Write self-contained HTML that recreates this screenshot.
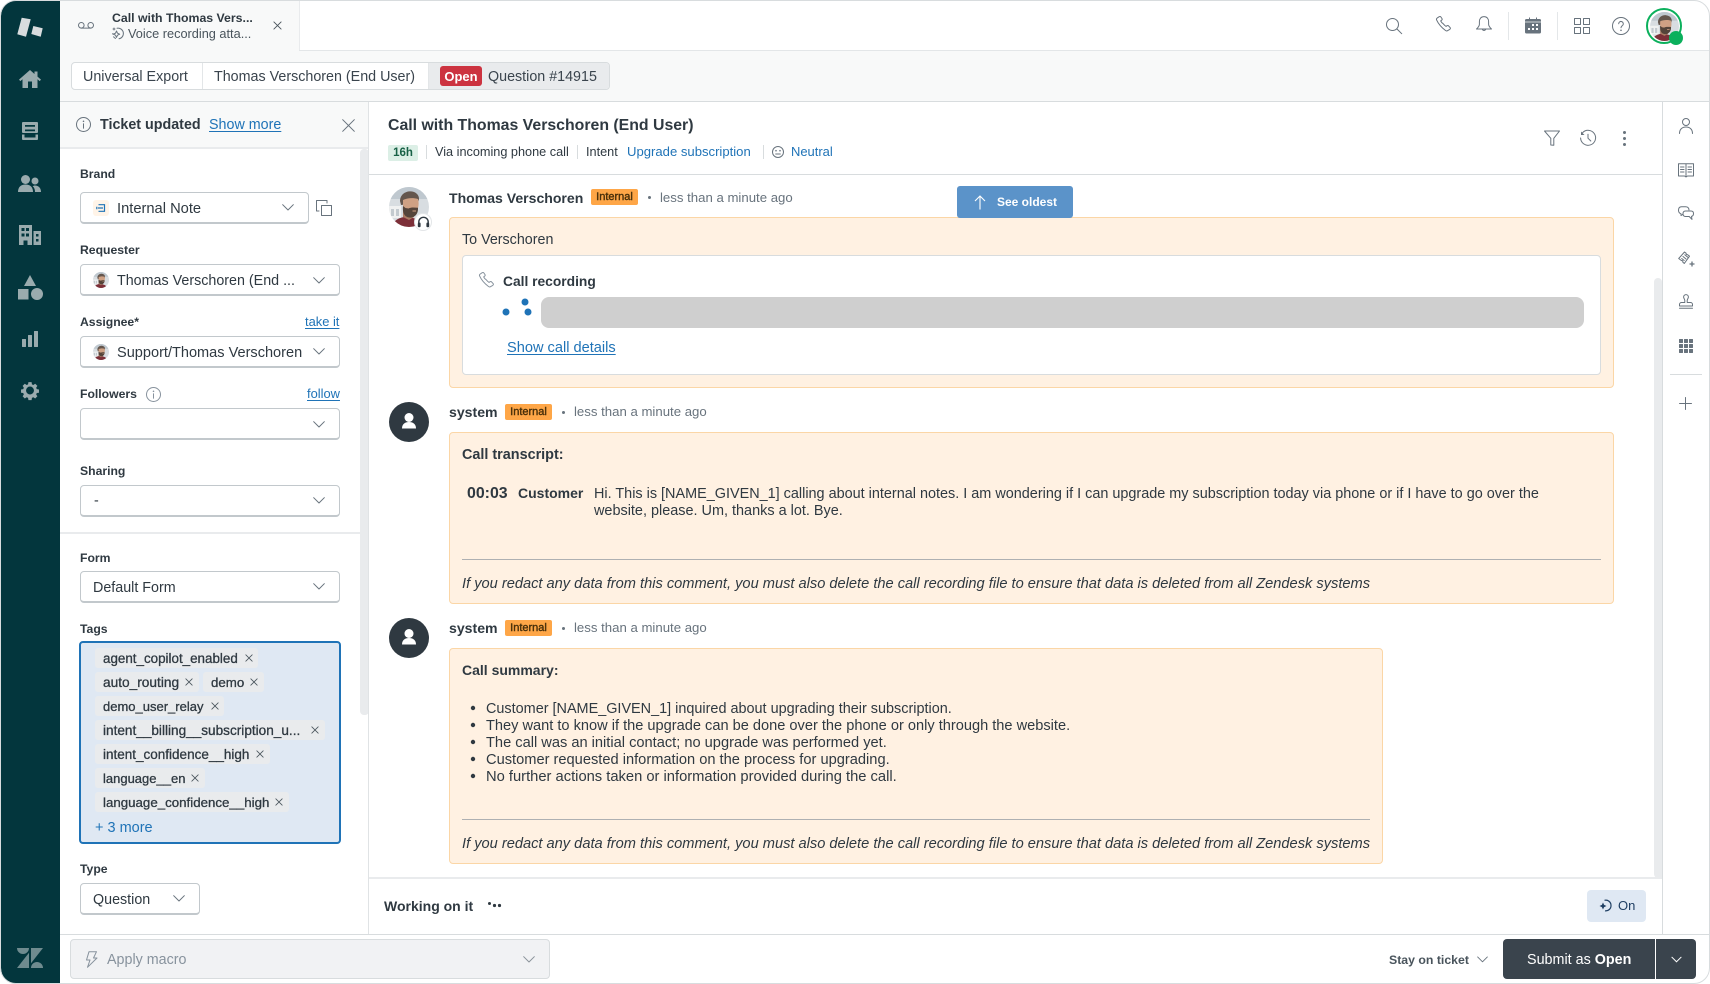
<!DOCTYPE html>
<html lang="en"><head><meta charset="utf-8"><title>Call with Thomas Verschoren</title>
<style>
*{box-sizing:border-box}
html,body{margin:0;padding:0;width:1710px;height:984px;overflow:hidden;background:#fff;font-family:"Liberation Sans",Arial,sans-serif;color:#2f3941}
#app{position:relative;width:1710px;height:984px;overflow:hidden;background:#fff}
.a{position:absolute}
.t{position:absolute;white-space:nowrap;line-height:20px;font-size:14.3px;margin-top:1px}
.b{font-weight:bold}
.l{color:#1f73b7}
.u{text-decoration:underline;text-decoration-thickness:1px;text-underline-offset:2px}
.lab{position:absolute;white-space:nowrap;line-height:16px;font-size:12.2px;font-weight:bold;left:80px}
.sel{position:absolute;background:#fff;border:1px solid #c2c8cc;border-bottom-width:2px;border-radius:4px;height:32px}
svg{position:absolute;overflow:visible}
.st{fill:none;stroke:#68737d;stroke-width:1;stroke-linecap:round;stroke-linejoin:round}
.nv{fill:#9aabae}
.tag{position:absolute;height:20px;left:95px;background:#e9ebed;border-radius:3px}
.tag span{position:absolute;left:8px;top:1px;line-height:20px;font-size:13.3px;white-space:nowrap;-webkit-text-stroke:.3px #2f3941}
.bub{position:absolute;background:#fff1e2;border:1px solid #fbd6a6;border-radius:4px}
.int{position:absolute;height:16px;width:47px;background:#fea647;border-radius:2px;color:#49300a;font-size:11px;line-height:17px;text-align:center;-webkit-text-stroke:.4px #49300a}
.time{position:absolute;white-space:nowrap;color:#68737d;font-size:13.2px;line-height:20px}
.d{position:absolute;width:3px;height:3px;border-radius:50%;background:#68737d}
.sep{position:absolute;background:#d8dcde}
.ph{filter:blur(.35px)}
</style></head><body>
<div id="app">
<svg width="0" height="0" style="position:absolute">
<defs>
<symbol id="chev" viewBox="0 0 12 7"><path d="M.7.7L6 6l5.3-5.3" fill="none" stroke="#68737d" stroke-width="1" stroke-linecap="round" stroke-linejoin="round"/></symbol>
<symbol id="x" viewBox="0 0 10 10"><path d="M1 1l8 8M9 1L1 9" fill="none" stroke="#49545c" stroke-width="1" stroke-linecap="round"/></symbol>
<clipPath id="cl"><circle cx="20" cy="20" r="20"/></clipPath>
<symbol id="man" viewBox="0 0 40 40"><g clip-path="url(#cl)">
<rect width="40" height="40" fill="#d8dde1"/><rect y="0" width="40" height="12" fill="#bfc8cf"/>
<rect x="0" y="19" width="12" height="12" fill="#f0f1f1"/><rect x="2" y="22" width="3" height="7" fill="#c3cacf"/><rect x="7" y="22" width="3" height="7" fill="#c3cacf"/>
<path d="M3 40c1-6 6-9 12-10l9 1c6 1 10 4 11 9z" fill="#7c2f38"/>
<path d="M14 24h11v6l-5 3-6-3z" fill="#a97a62"/>
<path d="M11 14c0-6 5-10 11-9.600 5 .4 8 3.600 8 7.600l-1 4-17 2z" fill="#64564d"/>
<path d="M14 13c4-2.200 10.500-2.500 15-1 .8 3 .8 6 0 9l-7 4-8-5z" fill="#cfa184"/>
<path d="M14 19l2.500 2 3 .5c3-1.500 6-.8 9.500-.8.300 4.500-1.500 8.500-6.500 9.800-5 .7-9.500-2.500-8.500-11.500z" fill="#54443a"/>
<path d="M23.500 24h3.500" stroke="#cfa184" stroke-width="1"/>
</g></symbol>
<symbol id="sysav" viewBox="0 0 40 40"><circle cx="20" cy="20" r="20" fill="#2f3941"/><circle cx="20" cy="15.500" r="4.500" fill="#fff"/><path d="M13 26.500c0-4.500 3-6.500 7-6.500s7 2 7 6.500z" fill="#fff"/></symbol>
</defs></svg>

<!-- left nav -->
<div class="a" style="left:1px;top:0;width:59px;height:984px;background:#03363d;border-radius:16px 0 0 16px"></div>
<svg style="left:0;top:0" width="60" height="420" viewBox="0 0 60 420">
<path d="M21.700 17.700l9 1.600L26 36.700l-8.700-2.400z" fill="#d8dcde"/>
<path d="M33.300 26l9.400 2.300-2 8.400-9.400-2.700z" fill="#d8dcde"/>
<path class="nv" d="M30 70L19 79.600l1.300 1.500 2.200-1.900V88h5.500v-6.500h4V88h5.500v-8.800l2.200 1.900 1.300-1.500-3.500-3V71.500h-3v2.500z"/>
<path class="nv" d="M23 122h14a1 1 0 011 1v9a1 1 0 01-1 1H23a1 1 0 01-1-1v-9a1 1 0 011-1zm2 3v1.800h10V125zm0 4.500v1.800h10v-1.800zM22 134.500h2.500v3h11v-3H38v4.500a1 1 0 01-1 1H23a1 1 0 01-1-1z"/>
<circle class="nv" cx="25.500" cy="179.500" r="4.500"/><path class="nv" d="M18 192c0-5 3-7.500 7.500-7.500S33 187 33 192z"/>
<circle class="nv" cx="35" cy="181" r="3.500"/><path class="nv" d="M35 185.500c3.500 0 6 2.500 6 6.500h-6c0-2.500-.8-4.500-2.300-5.700.6-.5 1.300-.8 2.300-.8z"/>
<path class="nv" d="M19 225h13v20h-4.500v-4.500h-4V245H19zm2.500 3v3h3v-3zm4.500 0v3h3v-3zm-4.500 5.500v3h3v-3zm4.500 0v3h3v-3z"/>
<path class="nv" d="M33.500 231H41v14h-7.500zm2.500 3v2.500h2.500V234zm0 5v2.500h2.500V239z"/>
<path class="nv" d="M30 275l6 11H24z"/><rect class="nv" x="18" y="289" width="10.500" height="10.500"/><circle class="nv" cx="37" cy="294" r="6"/>
<rect class="nv" x="22" y="339" width="4" height="8" rx=".5"/><rect class="nv" x="28" y="335" width="4" height="12" rx=".5"/><rect class="nv" x="34" y="331" width="4" height="16" rx=".5"/>
<g transform="translate(30 390.500) scale(.88) translate(-30 -392.500)"><path class="nv" fill-rule="evenodd" d="M28.200 383h3.600l.4 2.500 1.600.7 2.100-1.400 2.500 2.500-1.400 2.100.7 1.600 2.500.4v3.600l-2.500.4-.7 1.600 1.400 2.100-2.500 2.500-2.100-1.400-1.600.7-.4 2.500h-3.600l-.4-2.500-1.600-.7-2.100 1.400-2.500-2.500 1.400-2.100-.7-1.600-2.500-.4v-3.600l2.500-.4.7-1.600-1.400-2.100 2.500-2.500 2.100 1.400 1.600-.7zM30 388a4.500 4.500 0 100 9 4.500 4.500 0 000-9z"/></g>
</svg>
<svg style="left:17px;top:948px" width="26" height="20" viewBox="0 0 26 20">
<path fill="#6f8b8f" d="M12 4.800V20H0zM12 0a6 6 0 01-12 0zM14 20a6 6 0 0112 0zM14 15.200V0h12z"/>
</svg>

<!-- top band -->
<div class="a" style="left:60px;top:0;width:240px;height:51px;background:#f8f9f9;border-right:1px solid #e9ebed"></div>
<div class="a" style="left:299px;top:50px;width:1411px;height:1px;background:#e3e6e8"></div>
<div class="a" style="left:60px;top:51px;width:1650px;height:51px;background:#f8f9f9;border-bottom:1px solid #d8dcde"></div>
<svg style="left:78px;top:21px" width="16" height="10" viewBox="0 0 16 10"><circle class="st" cx="3.300" cy="4.300" r="2.800"/><circle class="st" cx="12.700" cy="4.300" r="2.800"/><path class="st" d="M3.300 7.100h9.400"/></svg>
<span class="t b" style="left:112px;top:7px;font-size:12.3px">Call with Thomas Vers...</span>
<svg style="left:112px;top:27px" width="13" height="13" viewBox="0 0 13 13"><path class="st" d="M5 1.200A5.200 5.200 0 117 11.800M1.600 9.800a5 5 0 002 1.600M.8 6.500v.6M4.500 4l1 2.200 2.200 1-2.200 1-1 2.200-1-2.200-2.200-1 2.200-1zM2 1v2M1 2h2"/></svg>
<span class="t" style="left:128px;top:23px;font-size:12.75px;color:#49545c">Voice recording atta...</span>
<svg style="left:273px;top:21px" width="9" height="9"><use href="#x" width="9" height="9"/></svg>

<!-- header icons -->
<svg style="left:1386px;top:18px" width="16" height="16" viewBox="0 0 16 16"><circle class="st" cx="6.500" cy="6.500" r="6"/><path class="st" d="M11 11l4.700 4.700"/></svg>
<svg id="ph1" style="left:1436px;top:16px" width="16" height="16" viewBox="0 0 16 16"><path class="st" d="M3.200.7L1.100 2.100c-.7.500-.8 1.100-.5 1.800.9 2 2.100 3.900 3.600 5.700 1.600 1.900 3.400 3.500 5.300 4.900.7.500 1.400.6 2 .2l2.200-1.300c.6-.4 1-1.100.5-1.700l-1.600-1.800c-.4-.5-1-.5-1.500-.2l-1.100.7c-1.100-.8-2.100-1.800-3.100-3C6 7.200 5.300 6.100 4.700 4.900l1-.8c.5-.4.600-1 .3-1.500L4.900 1C4.500.4 3.800.3 3.200.7z"/></svg>
<svg style="left:1476px;top:16px" width="16" height="16" viewBox="0 0 16 16"><path class="st" d="M8 .6c-3 0-4.600 2.200-4.600 5v2.600c0 2-1.500 3.400-2.900 4.800h15c-1.400-1.400-2.900-2.800-2.900-4.800V5.600C12.600 2.800 11 .6 8 .6zM6.300 13.200a1.800 1.800 0 003.400 0"/></svg>
<div class="sep" style="left:1508px;top:12px;width:1px;height:28px;background:#e4e7e9"></div>
<svg style="left:1525px;top:17px" width="16" height="17" viewBox="0 0 16 17"><path fill="#68737d" d="M1.500 2H4V.5h1V2h6V.5h1V2h2.500A1.500 1.500 0 0116 3.500V15a1.500 1.500 0 01-1.500 1.500h-13A1.500 1.500 0 010 15V3.500A1.500 1.500 0 011.500 2z"/><path d="M0 5h16" stroke="#fff" stroke-width=".7"/><g fill="#fff"><rect x="7" y="7" width="2" height="2"/><rect x="11" y="7" width="2" height="2"/><rect x="3" y="11" width="2" height="2"/><rect x="7" y="11" width="2" height="2"/><rect x="11" y="11" width="2" height="2"/></g></svg>
<div class="sep" style="left:1557px;top:12px;width:1px;height:28px;background:#e4e7e9"></div>
<svg style="left:1574px;top:18px" width="16" height="16" viewBox="0 0 16 16"><rect class="st" x=".5" y=".5" width="6" height="6"/><rect class="st" x="9.500" y=".5" width="6" height="6"/><rect class="st" x=".5" y="9.500" width="6" height="6"/><rect class="st" x="9.500" y="9.500" width="6" height="6"/></svg>
<svg style="left:1612px;top:17px" width="18" height="18" viewBox="0 0 18 18"><circle class="st" cx="9" cy="9" r="8.500"/><path class="st" d="M6.700 6.800a2.300 2.300 0 114 1.500c-.8.800-1.700 1.200-1.700 2.500"/><circle cx="9" cy="13.300" r=".8" fill="#68737d"/></svg>
<div class="a" style="left:1646px;top:8px;width:36px;height:36px;border:2px solid #0bb05c;border-radius:50%;background:#fff"></div>
<svg class="ph" style="left:1649.500px;top:11.500px" width="29" height="29"><use href="#man" width="29" height="29"/></svg>
<div class="a" style="left:1669px;top:31px;width:14px;height:14px;border-radius:50%;background:#0bb05c"></div>

<!-- breadcrumb -->
<div class="a" style="left:71px;top:62px;width:539px;height:28px;background:#fff;border:1px solid #d8dcde;border-radius:4px;overflow:hidden">
  <div class="a" style="left:130px;top:0;width:1px;height:26px;background:#e3e6e8"></div>
  <div class="a" style="left:356px;top:0;width:182px;height:26px;background:#e9ebed;border-left:1px solid #e3e6e8"></div>
</div>
<span class="t" style="left:83px;top:66px;color:#3a444d">Universal Export</span>
<span class="t" style="left:214px;top:66px;color:#3a444d">Thomas Verschoren (End User)</span>
<div class="a b" style="left:440px;top:66px;width:42px;height:20px;background:#cc3340;border-radius:3px;color:#fff;font-size:13px;line-height:21px;text-align:center">Open</div>
<span class="t" style="left:488px;top:66px;color:#3a444d">Question #14915</span>

<!-- left panel -->
<div class="a" style="left:60px;top:102px;width:308px;height:47px;background:#f8f9f9;border-bottom:2px solid #e9ebed"></div>
<svg style="left:76px;top:117px" width="15" height="15" viewBox="0 0 15 15"><circle class="st" cx="7.500" cy="7.500" r="7"/><path class="st" d="M7.500 6.800v4.400"/><circle cx="7.500" cy="4.300" r=".8" fill="#68737d"/></svg>
<span class="t b" style="left:100px;top:114px">Ticket updated</span>
<span class="t l u" style="left:209px;top:114px;font-size:14.3px">Show more</span>
<svg style="left:342px;top:119px" width="13" height="13" viewBox="0 0 13 13"><path class="st" d="M.7.700l11.600 11.600M12.300.7L.7 12.300"/></svg>
<div class="a" style="left:360px;top:149px;width:8.500px;height:566px;background:#e9ebed;border-radius:4px"></div>
<div class="a" style="left:368px;top:102px;width:1px;height:832px;background:#e0e3e5"></div>

<span class="lab" style="top:166px">Brand</span>
<div class="sel" style="left:80px;top:192px;width:229px"></div>
<div class="a" style="left:93px;top:200px;width:16px;height:16px;background:#fff4e8;border-radius:3px"></div>
<svg style="left:96px;top:204px" width="10" height="8" viewBox="0 0 10 8"><path d="M2.500.7h6v6.600h-6M2 4h5M.8 2.700v2.600" fill="none" stroke="#1f73b7" stroke-width="1.200"/></svg>
<span class="t" style="left:117px;top:198px;font-size:14.7px">Internal Note</span>
<svg style="left:282px;top:204px" width="12" height="7"><use href="#chev" width="12" height="7"/></svg>
<svg style="left:316px;top:200px" width="16" height="16" viewBox="0 0 16 16"><rect class="st" x="5.500" y="5.500" width="10" height="10"/><path class="st" d="M11 3V.5H.5V11H3"/></svg>

<span class="lab" style="top:242px">Requester</span>
<div class="sel" style="left:80px;top:264px;width:260px"></div>
<svg class="ph" style="left:93px;top:272px" width="16" height="16"><use href="#man" width="16" height="16"/></svg>
<span class="t" style="left:117px;top:270px">Thomas Verschoren (End ...</span>
<svg style="left:313px;top:277px" width="12" height="7"><use href="#chev" width="12" height="7"/></svg>

<span class="lab" style="top:314px">Assignee*</span>
<span class="t l u" style="left:305px;top:311px;font-size:12.9px">take it</span>
<div class="sel" style="left:80px;top:336px;width:260px"></div>
<svg class="ph" style="left:93px;top:344px" width="16" height="16"><use href="#man" width="16" height="16"/></svg>
<span class="t" style="left:117px;top:342px;font-size:14.55px">Support/Thomas Verschoren</span>
<svg style="left:313px;top:348px" width="12" height="7"><use href="#chev" width="12" height="7"/></svg>

<span class="lab" style="top:386px">Followers</span>
<svg style="left:146px;top:387px" width="15" height="15" viewBox="0 0 15 15"><circle class="st" cx="7.500" cy="7.500" r="7" style="stroke:#87929d"/><path class="st" d="M7.500 6.800v4.400" style="stroke:#87929d"/><circle cx="7.500" cy="4.300" r=".8" fill="#87929d"/></svg>
<span class="t l u" style="left:307px;top:383px;font-size:12.9px">follow</span>
<div class="sel" style="left:80px;top:408px;width:260px"></div>
<svg style="left:313px;top:421px" width="12" height="7"><use href="#chev" width="12" height="7"/></svg>

<span class="lab" style="top:463px">Sharing</span>
<div class="sel" style="left:80px;top:485px;width:260px"></div>
<span class="t" style="left:94px;top:490px">-</span>
<svg style="left:313px;top:497px" width="12" height="7"><use href="#chev" width="12" height="7"/></svg>

<div class="a" style="left:60px;top:532px;width:300px;height:2px;background:#e9ebed"></div>

<span class="lab" style="top:550px">Form</span>
<div class="sel" style="left:80px;top:571px;width:260px"></div>
<span class="t" style="left:93px;top:576.500px">Default Form</span>
<svg style="left:313px;top:583px" width="12" height="7"><use href="#chev" width="12" height="7"/></svg>

<span class="lab" style="top:621px">Tags</span>
<div class="a" style="left:79px;top:641px;width:262px;height:203px;background:#dfe8f3;border:2px solid #1f73b7;border-radius:4px"></div>
<div class="tag" style="top:648px;width:163px"><span style="font-size:13.4px">agent_copilot_enabled</span></div>
<svg style="left:245px;top:654px" width="8" height="8"><use href="#x" width="8" height="8"/></svg>
<div class="tag" style="top:672px;width:104px"><span style="font-size:13.7px">auto_routing</span></div>
<svg style="left:185px;top:678px" width="8" height="8"><use href="#x" width="8" height="8"/></svg>
<div class="tag" style="top:672px;left:203px;width:61px"><span>demo</span></div>
<svg style="left:250px;top:678px" width="8" height="8"><use href="#x" width="8" height="8"/></svg>
<div class="tag" style="top:696px;width:129px"><span style="font-size:13px">demo_user_relay</span></div>
<svg style="left:211px;top:702px" width="8" height="8"><use href="#x" width="8" height="8"/></svg>
<div class="tag" style="top:720px;width:230px"><span style="font-size:13.6px">intent__billing__subscription_u...</span></div>
<svg style="left:311px;top:726px" width="8" height="8"><use href="#x" width="8" height="8"/></svg>
<div class="tag" style="top:744px;width:175px"><span style="font-size:13.5px">intent_confidence__high</span></div>
<svg style="left:256px;top:750px" width="8" height="8"><use href="#x" width="8" height="8"/></svg>
<div class="tag" style="top:768px;width:110px"><span style="font-size:13px">language__en</span></div>
<svg style="left:191px;top:774px" width="8" height="8"><use href="#x" width="8" height="8"/></svg>
<div class="tag" style="top:792px;width:194px"><span>language_confidence__high</span></div>
<svg style="left:275px;top:798px" width="8" height="8"><use href="#x" width="8" height="8"/></svg>
<span class="t l" style="left:95px;top:817px;font-size:14.500px">+ 3 more</span>

<span class="lab" style="top:861px">Type</span>
<div class="sel" style="left:80px;top:883px;width:120px"></div>
<span class="t" style="left:93px;top:888.500px">Question</span>
<svg style="left:173px;top:895px" width="12" height="7"><use href="#chev" width="12" height="7"/></svg>

<!-- main header -->
<span class="t b" style="left:388px;top:115px;font-size:15.850px">Call with Thomas Verschoren (End User)</span>
<div class="a b" style="left:388px;top:145px;width:30px;height:16px;background:#dcefe6;border-radius:2px;color:#186146;font-size:11.500px;line-height:17px;text-align:center">16h</div>
<div class="sep" style="left:426px;top:145px;width:1px;height:14px"></div>
<span class="t" style="left:435px;top:141px;font-size:12.700px">Via incoming phone call</span>
<div class="sep" style="left:577px;top:145px;width:1px;height:14px"></div>
<span class="t" style="left:586px;top:141px;font-size:12.700px">Intent</span>
<span class="t l" style="left:627px;top:141px;font-size:13.100px">Upgrade subscription</span>
<div class="sep" style="left:763px;top:145px;width:1px;height:14px"></div>
<svg style="left:772px;top:146px" width="12" height="12" viewBox="0 0 12 12"><circle class="st" cx="6" cy="6" r="5.500"/><circle cx="4" cy="4.700" r=".8" fill="#68737d"/><circle cx="8" cy="4.700" r=".8" fill="#68737d"/><path class="st" d="M3.700 8h4.600"/></svg>
<span class="t l" style="left:791px;top:141px;font-size:12.950px">Neutral</span>
<svg style="left:1544px;top:130px" width="16" height="16" viewBox="0 0 16 16"><path class="st" d="M.5 1h15L9.800 8.300v7L6.800 15V8.300z"/></svg>
<svg style="left:1580px;top:130px" width="16" height="16" viewBox="0 0 16 16"><path class="st" d="M2.500 2.800A7.500 7.500 0 11.600 8M8 4.200v4l2.800 2.800"/><path d="M1 1.500l3.500 3.500H1z" fill="#68737d"/></svg>
<div class="a" style="left:1622.500px;top:130.500px;width:3px;height:3px;border-radius:50%;background:#68737d;box-shadow:0 6px 0 #68737d,0 12px 0 #68737d"></div>
<div class="a" style="left:369px;top:174px;width:1294px;height:1px;background:#d8dcde"></div>

<!-- right sidebar -->
<div class="a" style="left:1662px;top:102px;width:1px;height:832px;background:#d8dcde"></div>
<div class="a" style="left:1654px;top:278px;width:8px;height:600px;background:#e9ebed;border-radius:4px 4px 0 4px"></div>
<svg style="left:1678px;top:118px" width="16" height="16" viewBox="0 0 16 16"><circle class="st" cx="8" cy="4" r="3.500"/><path class="st" d="M1.500 15.500c0-4 2.500-6.500 6.500-6.500s6.500 2.500 6.500 6.500"/></svg>
<svg style="left:1678px;top:163px" width="16" height="15" viewBox="0 0 16 15"><path class="st" d="M.5.700h15v12.300H9.500L8 14l-1.500-1H.5zM8 1.500V13M2.500 4h3.500M2.500 6.500h3.500M2.500 9h3.500M10 4h3.500M10 6.500h3.500M10 9h3.500"/></svg>
<svg style="left:1678px;top:206px" width="16" height="16" viewBox="0 0 16 16"><path class="st" d="M3.500.7h4c2 0 3.300 1 3.500 3.200M4.500 8.500C4 9 3.500 9.300 3 9.500V7.800C1.500 7.300.5 6 .5 4.300.5 2.200 1.500.7 3.500.7M7.500 5h5.500c1.700 0 2.500 1 2.500 2.600 0 1.500-.8 2.500-2 2.800l.5 3-2.800-2.900H7.500C5.800 10.500 5 9.400 5 7.800 5 6 5.800 5 7.500 5z"/></svg>
<svg style="left:1678px;top:251px" width="17" height="16" viewBox="0 0 17 16"><path class="st" d="M.7 7.500L6.500 1l1.700 1.300c-.3.900.5 1.600 1.300 1.300L11.500 5.200 6.300 12.500 4.700 11c.4-.9-.3-1.700-1.200-1.400zM5 5.500l3 2.500M6.800 3.800l3 2.500M3.700 7.500l2.500 2"/><path d="M14 10.500v5M11.500 13h5" stroke="#68737d" stroke-width="1.300"/></svg>
<svg style="left:1679px;top:294px" width="14" height="15" viewBox="0 0 14 15"><path class="st" d="M7 .6a2.400 2.400 0 00-2.400 2.400c0 1.500 1.200 2 1.200 3.500v2H2.500A2 2 0 00.5 10.500v1.500h13v-1.500a2 2 0 00-2-2H8.200v-2c0-1.500 1.200-2 1.200-3.500A2.400 2.400 0 007 .6zM.5 14.300h13"/></svg>
<svg style="left:1679px;top:339px" width="14" height="14" viewBox="0 0 14 14" fill="#68737d"><rect width="4" height="4" rx=".5"/><rect x="5" width="4" height="4" rx=".5"/><rect x="10" width="4" height="4" rx=".5"/><rect y="5" width="4" height="4" rx=".5"/><rect x="5" y="5" width="4" height="4" rx=".5"/><rect x="10" y="5" width="4" height="4" rx=".5"/><rect y="10" width="4" height="4" rx=".5"/><rect x="5" y="10" width="4" height="4" rx=".5"/><rect x="10" y="10" width="4" height="4" rx=".5"/></svg>
<div class="a" style="left:1670px;top:374px;width:32px;height:1px;background:#d8dcde"></div>
<svg style="left:1679px;top:397px" width="13" height="13" viewBox="0 0 13 13"><path class="st" d="M6.500.5v12M.5 6.500h12"/></svg>

<!-- msg 1 -->
<svg class="ph" style="left:389px;top:187px" width="40" height="40"><use href="#man" width="40" height="40"/></svg>
<div class="a" style="left:414px;top:213px;width:18px;height:18px;background:#fff;border-radius:50%;border:1px solid #e3e6e8"></div>
<svg style="left:416.500px;top:215.500px" width="13" height="13" viewBox="0 0 13 13"><path d="M1.800 7.500V6a4.700 4.700 0 019.400 0v1.500" fill="none" stroke="#2f3941" stroke-width="1.400"/><rect x=".8" y="6.500" width="2.800" height="4.800" rx="1.200" fill="#2f3941"/><rect x="9.400" y="6.500" width="2.800" height="4.800" rx="1.200" fill="#2f3941"/></svg>
<span class="t b" style="left:449px;top:186.500px;font-size:14.050px">Thomas Verschoren</span>
<div class="int" style="left:591px;top:189px">Internal</div>
<div class="d" style="left:648px;top:196px"></div>
<span class="time" style="left:660px;top:187.500px">less than a minute ago</span>
<div class="bub" style="left:449px;top:217px;width:1165px;height:171px"></div>
<div class="a" style="left:957px;top:186px;width:116px;height:32px;background:#5b93c9;border-radius:3px"></div>
<svg style="left:974px;top:195px" width="12" height="15" viewBox="0 0 12 15"><path d="M6 14.500V1M1 6l5-5 5 5" fill="none" stroke="#fff" stroke-width="1.100"/></svg>
<span class="t b" style="left:997px;top:190.500px;color:#fff;font-size:12px">See oldest</span>
<span class="t" style="left:462px;top:229px">To Verschoren</span>
<div class="a" style="left:462px;top:255px;width:1139px;height:120px;background:#fff;border:1px solid #d8dcde;border-radius:4px"></div>
<svg style="left:479px;top:272px" width="16" height="16" viewBox="0 0 16 16"><path d="M3.200.7L1.100 2.100c-.7.500-.8 1.100-.5 1.800.9 2 2.100 3.900 3.600 5.700 1.600 1.900 3.400 3.500 5.300 4.900.7.500 1.400.6 2 .2l2.200-1.300c.6-.4 1-1.100.5-1.700l-1.600-1.800c-.4-.5-1-.5-1.500-.2l-1.100.7c-1.100-.8-2.100-1.800-3.100-3C6 7.200 5.300 6.100 4.700 4.900l1-.8c.5-.4.600-1 .3-1.500L4.900 1C4.500.4 3.800.3 3.200.7z" fill="none" stroke="#87929d" stroke-width="1"/></svg>
<span class="t b" style="left:503px;top:271px;font-size:13.800px">Call recording</span>
<svg style="left:500px;top:296px" width="36" height="24"><circle cx="6" cy="16" r="3.500" fill="#1f73b7"/><circle cx="25" cy="6" r="3.500" fill="#1f73b7"/><circle cx="28" cy="16" r="3.500" fill="#1f73b7"/></svg>
<div class="a" style="left:541px;top:297px;width:1043px;height:31px;background:#cfcfcf;border-radius:8px"></div>
<span class="t l u" style="left:507px;top:337px;font-size:14.600px">Show call details</span>

<!-- msg 2 -->
<svg style="left:389px;top:402px" width="40" height="40"><use href="#sysav" width="40" height="40"/></svg>
<span class="t b" style="left:449px;top:401px;font-size:14.100px">system</span>
<div class="int" style="left:505px;top:404px">Internal</div>
<div class="d" style="left:562px;top:411px"></div>
<span class="time" style="left:574px;top:401.500px">less than a minute ago</span>
<div class="bub" style="left:449px;top:432px;width:1165px;height:172px"></div>
<span class="t b" style="left:462px;top:444px;font-size:14.400px">Call transcript:</span>
<span class="t b" style="left:467px;top:483px;font-size:15.900px">00:03</span>
<span class="t b" style="left:518px;top:482px;font-size:14px">Customer</span>
<span class="t" style="left:594px;top:483px;font-size:14.430px">Hi. This is [NAME_GIVEN_1] calling about internal notes. I am wondering if I can upgrade my subscription today via phone or if I have to go over the</span>
<span class="t" style="left:594px;top:500px;font-size:14.450px">website, please. Um, thanks a lot. Bye.</span>
<div class="a" style="left:462px;top:559px;width:1139px;height:1px;background:#aeb0b2"></div>
<span class="t" style="left:462px;top:573px;font-size:14.640px;font-style:italic">If you redact any data from this comment, you must also delete the call recording file to ensure that data is deleted from all Zendesk systems</span>

<!-- msg 3 -->
<svg style="left:389px;top:618px" width="40" height="40"><use href="#sysav" width="40" height="40"/></svg>
<span class="t b" style="left:449px;top:617px;font-size:14.100px">system</span>
<div class="int" style="left:505px;top:620px">Internal</div>
<div class="d" style="left:562px;top:627px"></div>
<span class="time" style="left:574px;top:617.500px">less than a minute ago</span>
<div class="bub" style="left:449px;top:648px;width:934px;height:216px"></div>
<span class="t b" style="left:462px;top:659px;font-size:14px">Call summary:</span>
<svg style="left:470px;top:700px" width="6" height="80" fill="#2f3941"><circle cx="3" cy="8" r="2.200"/><circle cx="3" cy="25" r="2.200"/><circle cx="3" cy="42" r="2.200"/><circle cx="3" cy="59" r="2.200"/><circle cx="3" cy="76" r="2.200"/></svg>
<span class="t" style="left:486px;top:698px;font-size:14.430px">Customer [NAME_GIVEN_1] inquired about upgrading their subscription.</span>
<span class="t" style="left:486px;top:715px;font-size:14.600px">They want to know if the upgrade can be done over the phone or only through the website.</span>
<span class="t" style="left:486px;top:732px;font-size:14.640px">The call was an initial contact; no upgrade was performed yet.</span>
<span class="t" style="left:486px;top:749px;font-size:14.650px">Customer requested information on the process for upgrading.</span>
<span class="t" style="left:486px;top:766px;font-size:14.730px">No further actions taken or information provided during the call.</span>
<div class="a" style="left:462px;top:819px;width:908px;height:1px;background:#aeb0b2"></div>
<span class="t" style="left:462px;top:833px;font-size:14.640px;font-style:italic">If you redact any data from this comment, you must also delete the call recording file to ensure that data is deleted from all Zendesk systems</span>

<!-- working -->
<div class="a" style="left:369px;top:877px;width:1293px;height:2px;background:#e9ebed"></div>
<span class="t b" style="left:384px;top:895px;font-size:14px">Working on it</span>
<svg style="left:487px;top:900px" width="16" height="10" fill="#2f3941"><circle cx="2.500" cy="3.500" r="1.500"/><circle cx="7.500" cy="5.500" r="1.600"/><circle cx="12.500" cy="5.500" r="1.600"/></svg>
<div class="a" style="left:1587px;top:890px;width:59px;height:32px;background:#dfe8f3;border-radius:4px"></div>
<svg style="left:1599px;top:899px" width="13" height="13" viewBox="0 0 13 13"><path d="M5.500 1.300a5.200 5.200 0 016.500 5A5.200 5.200 0 016 11.800" fill="none" stroke="#1f3f63" stroke-width="1.200"/><path d="M4 3.500l1.100 2.400 2.400 1.100-2.400 1.100L4 10.500 2.900 8.100.5 7l2.400-1.100z" fill="#1f3f63"/></svg>
<span class="t" style="left:1618px;top:895px;font-size:13px;color:#1f3f63">On</span>

<!-- bottom bar -->
<div class="a" style="left:60px;top:934px;width:1650px;height:1px;background:#d8dcde"></div>
<div class="a" style="left:70px;top:939px;width:480px;height:40px;background:#f1f2f4;border:1px solid #d8dcde;border-radius:4px"></div>
<svg style="left:85px;top:951px" width="13" height="17" viewBox="0 0 13 17"><path d="M4 .7h7.500L8.500 7H12L2.500 16.300 5 9H1.500z" fill="none" stroke="#87929d" stroke-width="1" stroke-linejoin="round"/></svg>
<span class="t" style="left:107px;top:949px;color:#87929d">Apply macro</span>
<svg style="left:523px;top:956px" width="12" height="7"><use href="#chev" width="12" height="7" style="opacity:.75"/></svg>
<span class="t b" style="left:1389px;top:949px;font-size:12.300px;color:#49545c">Stay on ticket</span>
<svg style="left:1477px;top:956px" width="11" height="7"><use href="#chev" width="11" height="7"/></svg>
<div class="a" style="left:1503px;top:939px;width:193px;height:40px;background:#3a444d;border-radius:4px"></div>
<div class="a" style="left:1655px;top:939px;width:1px;height:40px;background:#fff"></div>
<span class="t" style="left:1527px;top:949px;font-size:14.350px;color:#fff">Submit as <b>Open</b></span>
<svg style="left:1671px;top:956px" width="11" height="7" viewBox="0 0 12 7"><path d="M.7.700L6 6l5.300-5.300" fill="none" stroke="#fff" stroke-width="1.100"/></svg>

<!-- outer frame -->
<div class="a" style="left:0;top:0;width:1710px;height:984px;border:1px solid #d8dcde;border-radius:16px;box-shadow:0 0 0 20px #fff;pointer-events:none"></div>
</div>
</body></html>
